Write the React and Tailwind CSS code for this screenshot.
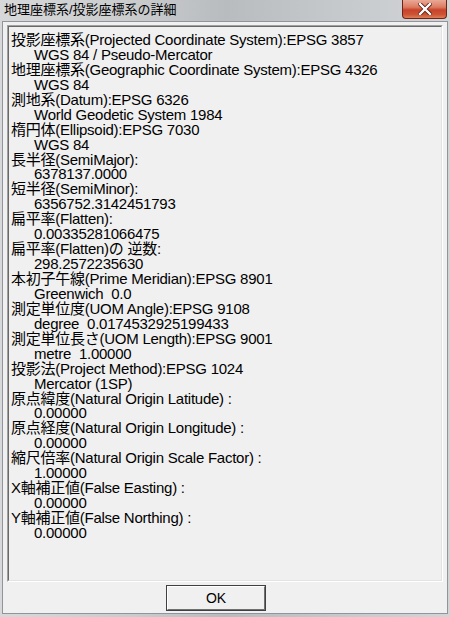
import React from "react";

const lines = [
  ["投影座標系(Projected Coordinate System):EPSG 3857", 0],
  ["WGS 84 / Pseudo-Mercator", 1],
  ["地理座標系(Geographic Coordinate System):EPSG 4326", 0],
  ["WGS 84", 1],
  ["測地系(Datum):EPSG 6326", 0],
  ["World Geodetic System 1984", 1],
  ["楕円体(Ellipsoid):EPSG 7030", 0],
  ["WGS 84", 1],
  ["長半径(SemiMajor):", 0],
  ["6378137.0000", 1],
  ["短半径(SemiMinor):", 0],
  ["6356752.3142451793", 1],
  ["扁平率(Flatten):", 0],
  ["0.00335281066475", 1],
  ["扁平率(Flatten)の 逆数:", 0],
  ["298.2572235630", 1],
  ["本初子午線(Prime Meridian):EPSG 8901", 0],
  ["Greenwich  0.0", 1],
  ["測定単位度(UOM Angle):EPSG 9108", 0],
  ["degree  0.0174532925199433", 1],
  ["測定単位長さ(UOM Length):EPSG 9001", 0],
  ["metre  1.00000", 1],
  ["投影法(Project Method):EPSG 1024", 0],
  ["Mercator (1SP)", 1],
  ["原点緯度(Natural Origin Latitude) :", 0],
  ["0.00000", 1],
  ["原点経度(Natural Origin Longitude) :", 0],
  ["0.00000", 1],
  ["縮尺倍率(Natural Origin Scale Factor) :", 0],
  ["1.00000", 1],
  ["X軸補正値(False Easting) :", 0],
  ["0.00000", 1],
  ["Y軸補正値(False Northing) :", 0],
  ["0.00000", 1],
];

export default function App() {
  return (
    <div
      className="w-[450px] h-[617px] flex flex-col px-[2px] pb-[3px] bg-[linear-gradient(90deg,#d6d8da_0%,#c9cbcd_30%,#b9bcbf_50%,#c6c9cc_75%,#d2d4d6_100%)]"
      style={{ fontFamily: '"Liberation Sans", "Noto Sans CJK JP", sans-serif' }}
    >
      {/* title bar */}
      <div className="h-[22px] flex items-start justify-between -mx-[2px]">
        <div className="pl-[4px] pt-[2px] text-[13px] leading-[16px] text-black">
          地理座標系/投影座標系の詳細
        </div>
        <div className="mr-[3px] w-[45px] h-[19px] rounded-b-[4px] border border-t-0 border-[#6e2418] bg-[linear-gradient(180deg,#eaa996_0%,#dc7b62_40%,#c8442a_55%,#cd5233_80%,#de7e56_100%)] flex items-center justify-center">
          <svg width="14" height="12" viewBox="0 0 14 12">
            <path d="M2 1 L12 11 M12 1 L2 11" stroke="#5a1a10" strokeWidth="4" strokeLinecap="square" />
            <path d="M2 1 L12 11 M12 1 L2 11" stroke="#ffffff" strokeWidth="2.4" strokeLinecap="square" />
          </svg>
        </div>
      </div>

      {/* client area */}
      <div className="flex-1 flex flex-col bg-[#f0f0f0] border-t border-l border-[#8f959b] border-r border-b pt-[3px] px-[4px] pb-[2px]">
        <div className="h-[557px] border-t border-l border-[#a0a0a0] border-r-white border-b-white border-r border-b">
          <div className="h-full border-t border-l border-[#696969] border-r-[#e3e3e3] border-b-[#e3e3e3] border-r border-b pt-[6px] text-[15px] leading-[14.94px] tracking-[-0.25px] text-black">
            {lines.map(([t, ind], i) => (
              <div
                key={i}
                className={ind ? "pl-[25px] whitespace-pre" : "pl-[2px] whitespace-pre"}
              >
                {t}
              </div>
            ))}
          </div>
        </div>
        <div className="mt-[3px] pl-[159px]">
          <div className="w-[100px] h-[26px] border border-[#404040] bg-[#f0f0f0]">
            <div className="h-full border-t border-l border-white border-r border-b border-r-[#707070] border-b-[#707070] flex items-center justify-center text-[14px] text-black">
              OK
            </div>
          </div>
        </div>
      </div>
    </div>
  );
}
